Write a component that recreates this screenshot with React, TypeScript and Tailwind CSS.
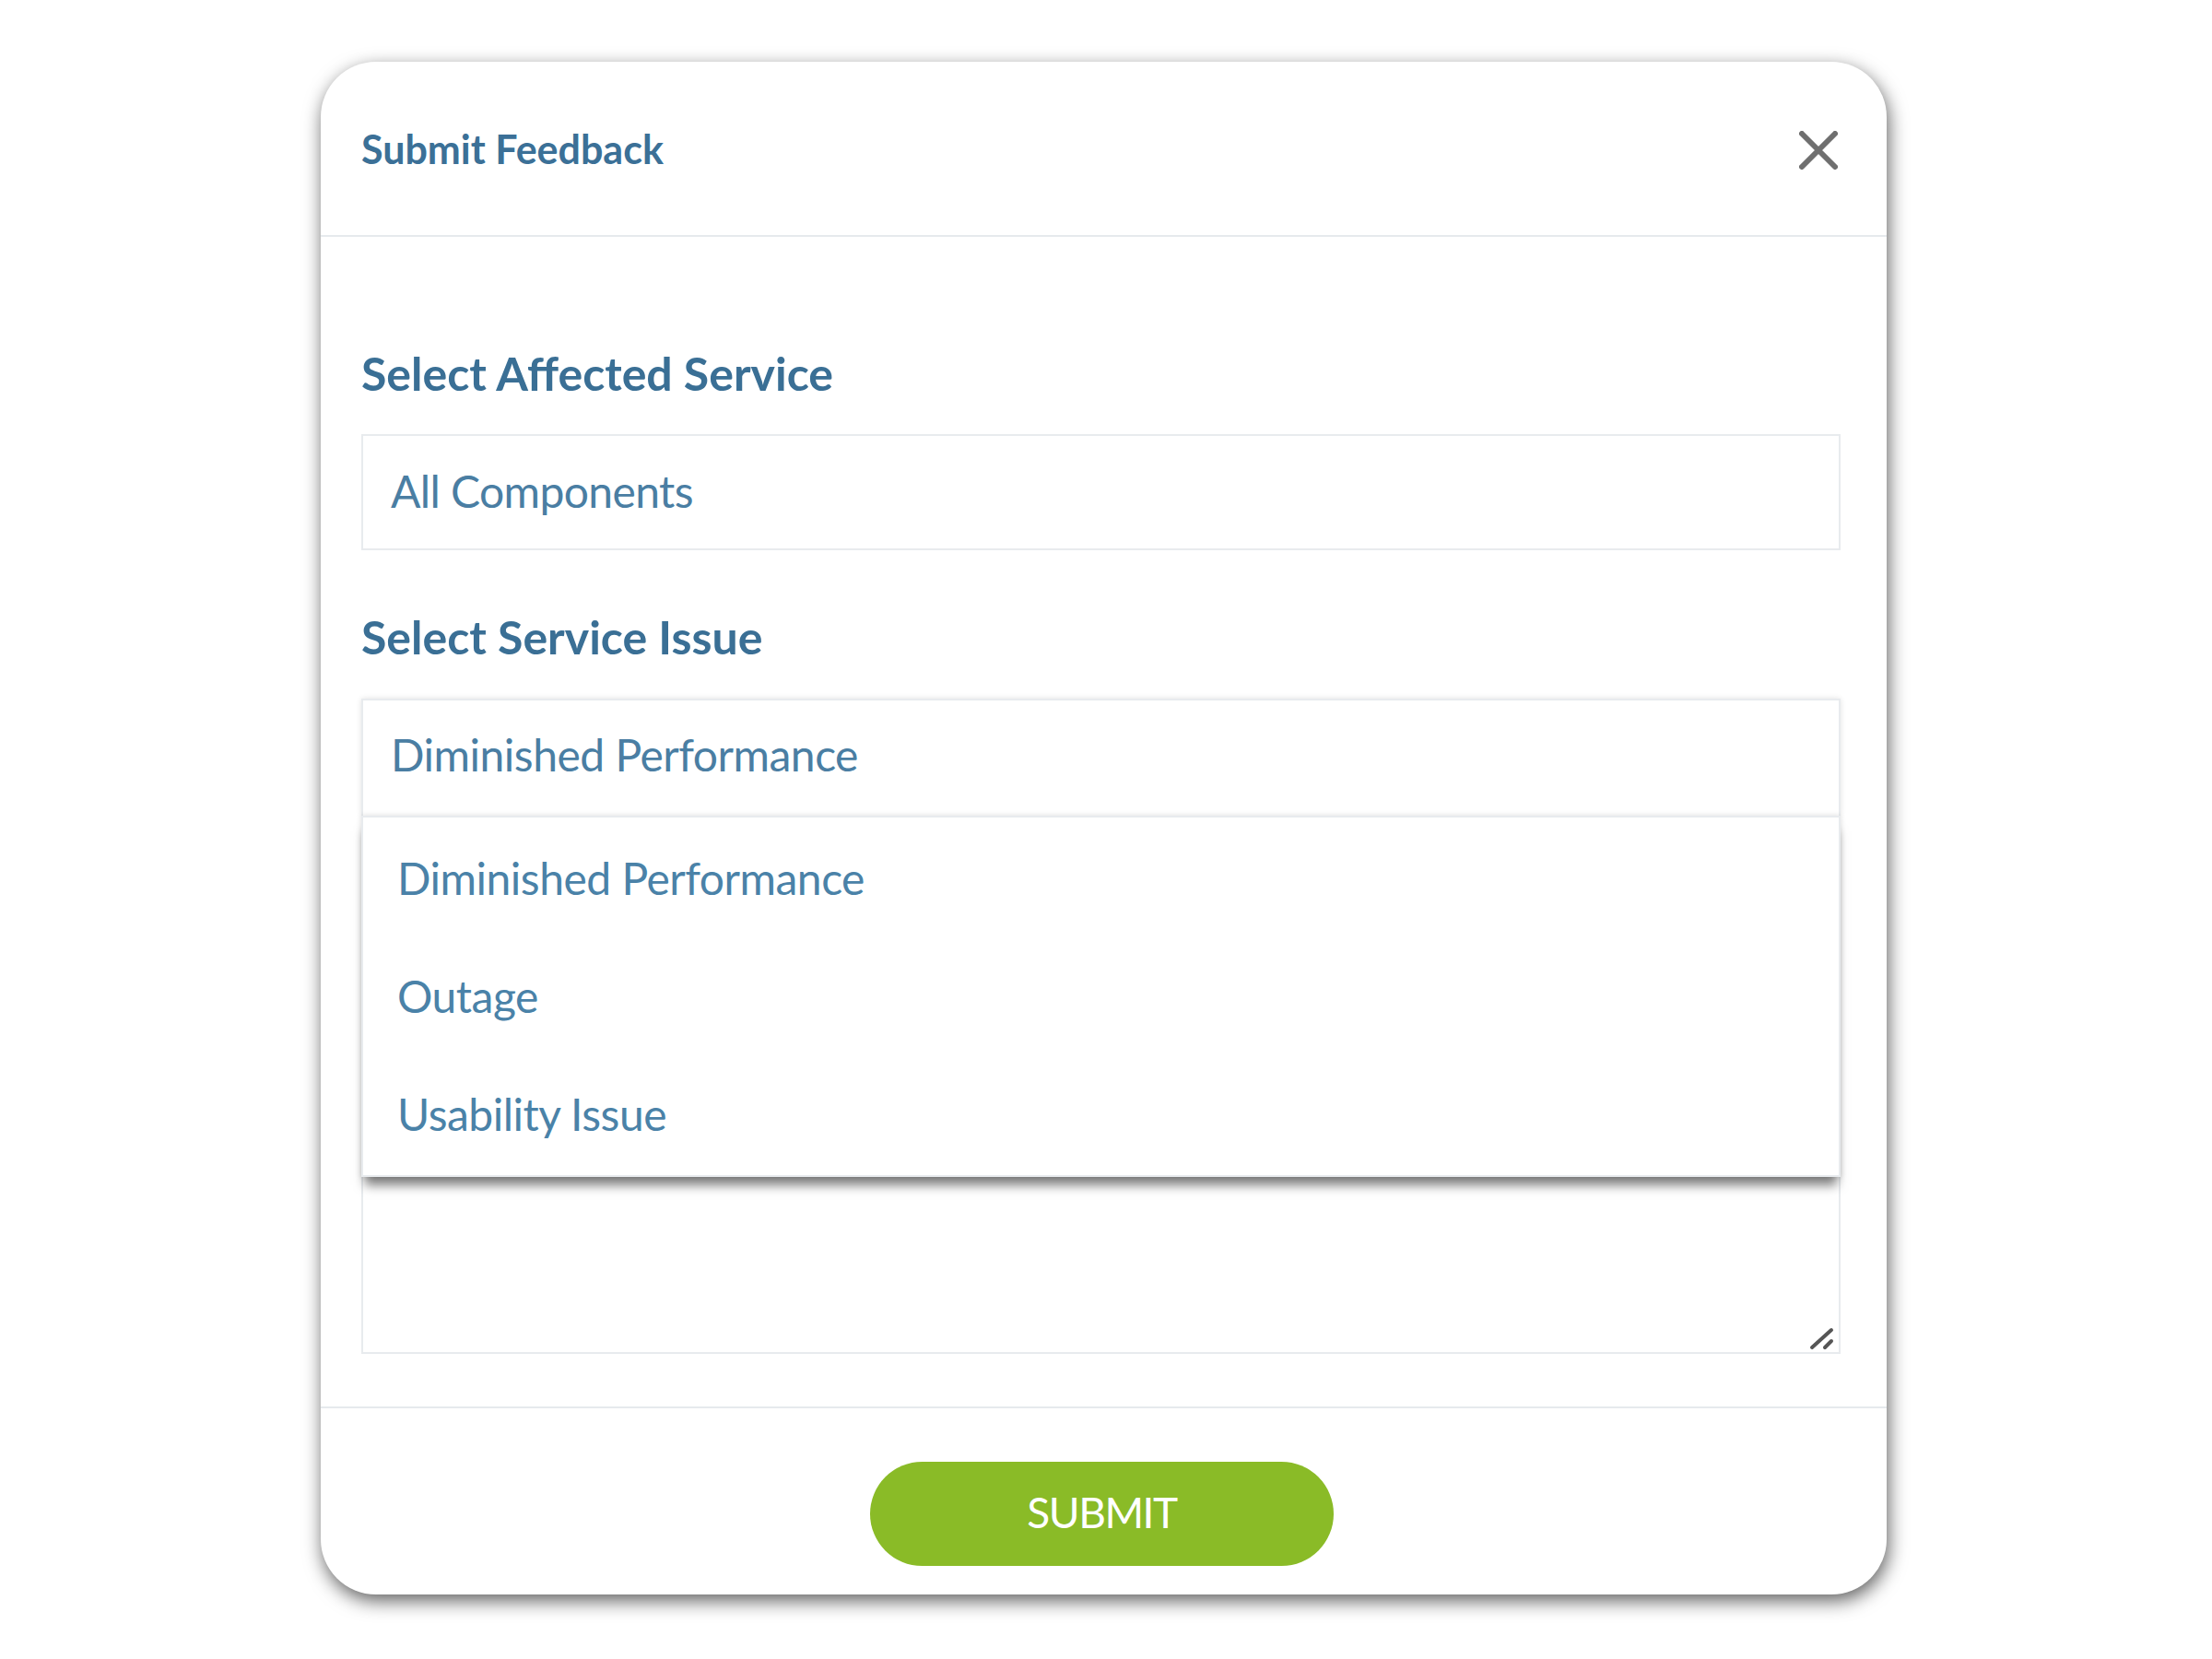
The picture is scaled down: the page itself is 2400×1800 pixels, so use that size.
export default function App() {
  const options = ["Diminished Performance", "Outage", "Usability Issue"];
  return (
    <div className="w-[2400px] h-[1800px] bg-white pt-[67px] pl-[348px] font-['Lato','Open_Sans',sans-serif]">
      <div className="w-[1699px] h-[1663px] rounded-[60px] bg-white shadow-[2px_7px_20px_rgba(0,0,0,0.62)] flex flex-col">
        {/* Header */}
        <div className="h-[190px] shrink-0 border-b-2 border-[#e6eaed] flex items-center justify-between pl-[44px] pr-[52px]">
          <h2 className="text-[43px] font-bold leading-none text-[#3b7097]">Submit Feedback</h2>
          <button className="w-[44px] h-[44px] flex items-center justify-center mt-[4px] ml-[4px]" aria-label="Close">
            <svg width="42" height="42" viewBox="0 0 42 42">
              <path d="M3 3 L39 39 M39 3 L3 39" stroke="#6f6f6f" strokeWidth="6" strokeLinecap="round" fill="none" />
            </svg>
          </button>
        </div>

        {/* Body */}
        <div className="flex-1 flex flex-col pl-[44px] pr-[50px] pt-[118px] pb-[57px]">
          <label className="text-[50px] font-bold leading-[60px] text-[#3a6f95]">Select Affected Service</label>
          <div className="mt-[36px] h-[126px] border-2 border-[#e8ebee] flex items-center pl-[30px] pb-[2px] text-[48px] tracking-[-0.6px] text-[#4a7ea3]">
            All Components
          </div>

          <label className="mt-[64px] text-[50px] font-bold leading-[60px] text-[#3a6f95]">Select Service Issue</label>
          <div className="mt-[37px] relative z-10">
            <div className="h-[127px] border-2 border-b-0 border-[#e8ebee] bg-white flex items-center pl-[30px] pb-[8px] text-[48px] tracking-[-0.5px] text-[#4a7ea3] shadow-[0_0_6px_rgba(0,0,0,0.12)]">
              Diminished Performance
            </div>
            <div className="absolute top-full left-0 right-0 bg-white border-2 border-[#e8ebee] py-[2px] shadow-[0_13px_11px_-4px_rgba(0,0,0,0.5),0_0_6px_rgba(0,0,0,0.14)]">
              {options.map((o) => (
                <div key={o} className="h-[128px] flex items-center pl-[37px] text-[48px] tracking-[-0.5px] text-[#4a82a8]">
                  {o}
                </div>
              ))}
            </div>
          </div>

          <div className="mt-[161px] h-[423px] border-2 border-[#e8ebee] relative">
            <textarea className="w-full h-full resize-none outline-none bg-transparent" aria-label="Comment" />
            <svg className="absolute right-[4px] bottom-[1px]" width="28" height="26" viewBox="0 0 28 26">
              <path d="M3 22 L24 3 M17 22 L24 15" stroke="#555" strokeWidth="4" strokeLinecap="round" fill="none" />
            </svg>
          </div>
        </div>

        {/* Footer */}
        <div className="h-[204px] shrink-0 border-t-2 border-[#e6eaed] flex justify-center pt-[58px]">
          <button className="w-[503px] h-[113px] rounded-full bg-[#8abb27] text-white text-[46px] tracking-[-1.5px] leading-none pb-[4px] mr-[4px]">
            SUBMIT
          </button>
        </div>
      </div>
    </div>
  );
}
